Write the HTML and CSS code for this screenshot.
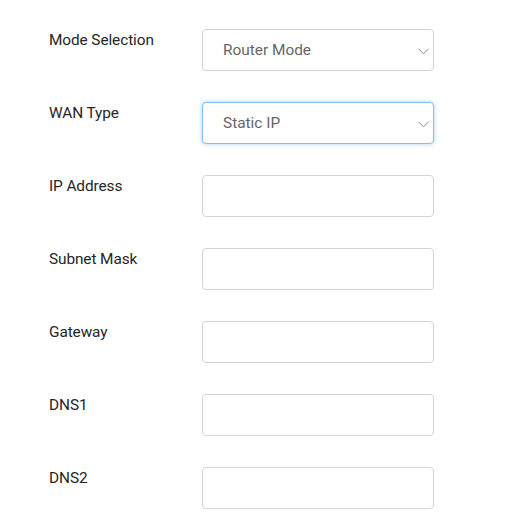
FILE: index.html
```html
<!DOCTYPE html>
<html>
<head>
<meta charset="utf-8">
<link rel="stylesheet" href="styles.css">
</head>
<body>
<form class="form">
  <div class="row">
    <label class="label">Mode Selection</label>
    <div class="field select">
      <span class="value">Router Mode</span>
      <svg class="chev" width="11" height="7" viewBox="0 0 11 7"><path d="M0.5 0.8 L5.5 5.8 L10.5 0.8" fill="none" stroke="#8a8a8a" stroke-width="1"/></svg>
    </div>
  </div>
  <div class="row">
    <label class="label">WAN Type</label>
    <div class="field select focus">
      <span class="value">Static IP</span>
      <svg class="chev" width="11" height="7" viewBox="0 0 11 7"><path d="M0.5 0.8 L5.5 5.8 L10.5 0.8" fill="none" stroke="#8a8a8a" stroke-width="1"/></svg>
    </div>
  </div>
  <div class="row">
    <label class="label">IP Address</label>
    <div class="field"></div>
  </div>
  <div class="row">
    <label class="label">Subnet Mask</label>
    <div class="field"></div>
  </div>
  <div class="row">
    <label class="label">Gateway</label>
    <div class="field"></div>
  </div>
  <div class="row">
    <label class="label">DNS1</label>
    <div class="field"></div>
  </div>
  <div class="row">
    <label class="label">DNS2</label>
    <div class="field"></div>
  </div>
</form>
</body>
</html>
```
FILE: styles.css
```css
html, body {
  margin: 0;
  padding: 0;
  background: #fff;
}
body {
  font-family: Roboto, "Noto Sans", sans-serif;
  color: #262626;
}
.form {
  display: flex;
  flex-direction: column;
  gap: 31px;
  padding: 29px 0 0 49px;
}
.row {
  display: flex;
  align-items: flex-start;
}
.label {
  width: 153px;
  font-size: 15.4px;
  line-height: 20px;
  padding-top: 1px;
  color: #262626;
  letter-spacing: -0.1px;
}
.field {
  box-sizing: border-box;
  width: 232px;
  height: 42px;
  border: 1px solid #d4d4d4;
  border-radius: 4px;
  background: #fff;
  display: flex;
  align-items: center;
  padding: 0 4px 0 20px;
}
.select .value {
  flex: 1;
  font-size: 15.4px;
  color: #666;
}
.chev {
  margin-right: 0;
  margin-top: 2px;
}
.focus {
  border-color: #84c0ec;
  box-shadow: 0 0 4px rgba(90, 170, 235, 0.55);
}
```
